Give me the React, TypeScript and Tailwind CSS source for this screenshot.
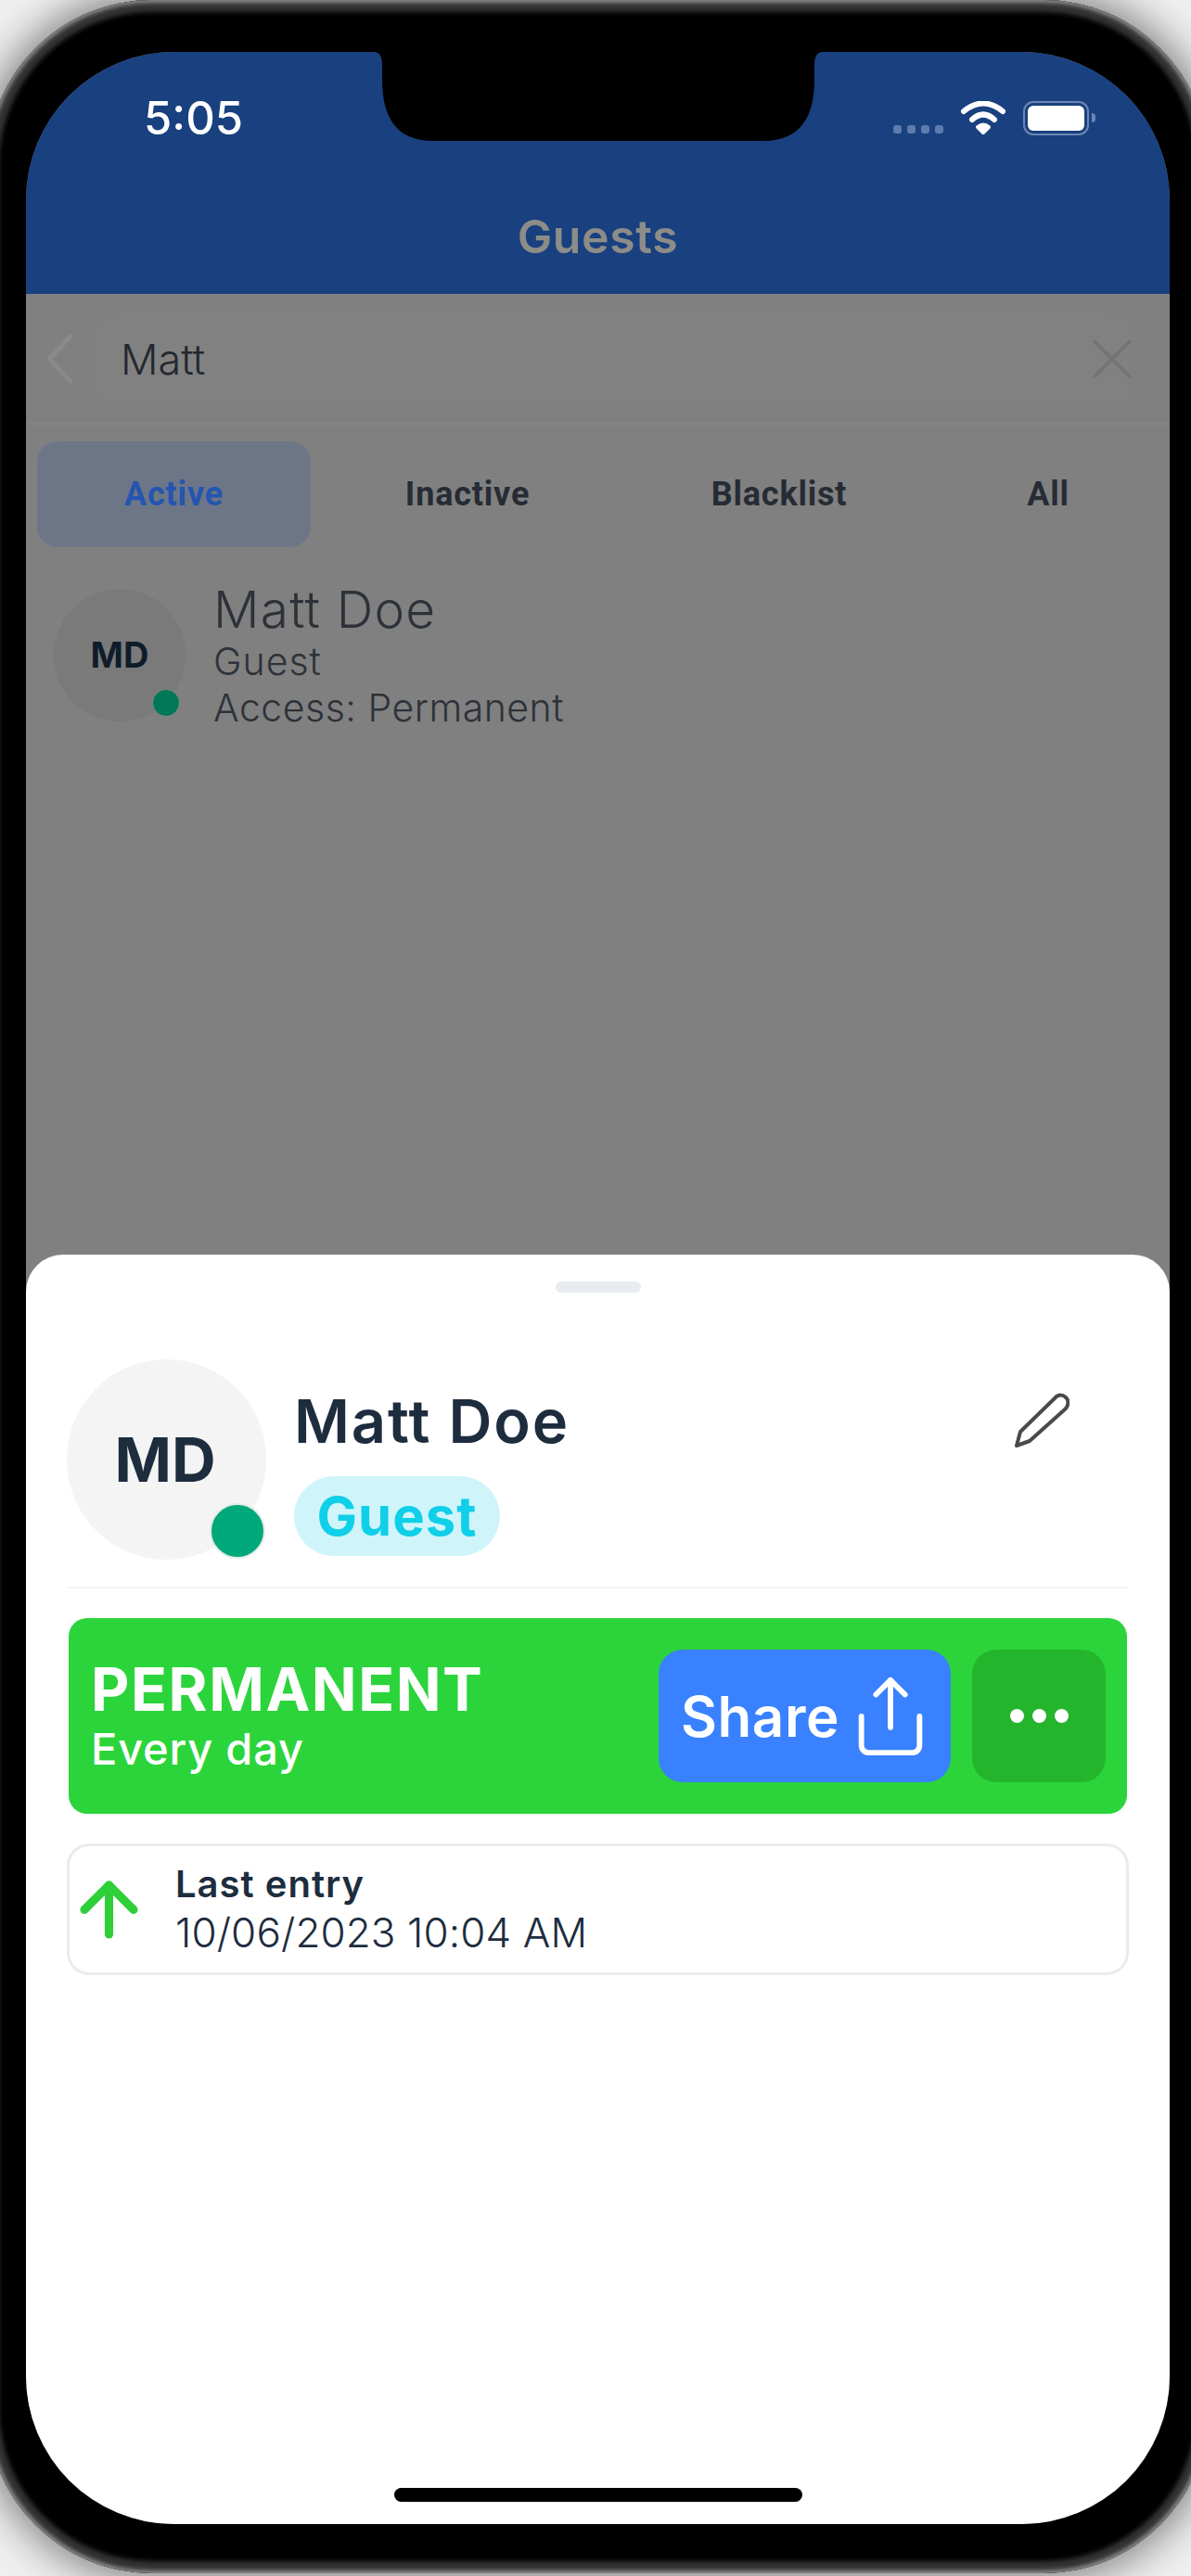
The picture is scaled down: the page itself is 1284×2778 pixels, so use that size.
import { ArrowUp, Share } from "lucide-react";

const mont = "font-['Inter','Liberation_Sans',sans-serif]";
const rob = "font-['Roboto','Liberation_Sans',sans-serif]";

function Notch() {
  return (
    <svg className="absolute left-[375px] top-0" width="484" height="96" viewBox="0 0 484 96">
      <path d="M0 0Q9 0 9 14V30C9 70 24 96 64 96H420C460 96 475 70 475 30V14Q475 0 484 0Z" fill="#000" />
    </svg>
  );
}

function Wifi() {
  return (
    <svg width="50" height="37" viewBox="0 0 50 37" fill="none" stroke="#fff" strokeLinecap="round">
      <path d="M4 11Q25 -6 46 11" strokeWidth="6" />
      <path d="M13 20Q25 9 37 20" strokeWidth="6" />
      <path d="M25 34L19 28Q25 23 31 28Z" fill="#fff" strokeWidth="4" strokeLinejoin="round" />
    </svg>
  );
}

function PencilIcon() {
  return (
    <svg width="60" height="60" viewBox="0 0 60 60" fill="none" stroke="#4a4a4a" strokeWidth="4" strokeLinejoin="round">
      <path d="M3 58L7 43L44 7C48 2 54 3 57 7C59 10 59 14 56 18L17 53Z" />
    </svg>
  );
}

function Battery() {
  return (
    <div className="flex items-center">
      <div className="flex h-[37px] w-[71px] rounded-[11px] border-2 border-[#6c86b0] p-[3px]">
        <div className="h-full w-full rounded-[6px] bg-white" />
      </div>
      <div className="ml-[3px] h-[10px] w-[4px] rounded-r-full bg-[#6c86b0]" />
    </div>
  );
}

function Tab({ label, w, active }: { label: string; w: string; active?: boolean }) {
  return (
    <div
      className={`flex h-[114px] items-center justify-center rounded-[22px] text-[36px] font-bold tracking-[0.8px] ${rob} ${w} ${
        active ? "bg-[#6c7687] text-[#2455b0]" : "text-[#262c35]"
      }`}
    >
      {label}
    </div>
  );
}

export default function App() {
  return (
    <div className="h-[2778px] w-[1284px] overflow-hidden bg-[#f0f0f0]">
      <div className="ml-[-14px] h-[2775px] w-[1317px] rounded-[178px] bg-black px-[42px] pt-[56px] shadow-[inset_0_0_4px_3px_#8a8a8a,inset_0_0_5px_13px_#333333,0_0_45px_6px_rgba(0,0,0,0.5)]">
        <div className="relative flex h-[2666px] w-[1233px] flex-col overflow-hidden rounded-[160px] bg-[#808080]">
          <Notch />
          <header className="flex h-[261px] shrink-0 flex-col bg-[#19407f]">
            <div className="mt-[49px] flex h-[44px] items-center justify-between pl-[127px] pr-[80px]">
              <span className={`text-[49px] font-medium leading-none text-white ${mont}`}>5:05</span>
              <div className="flex items-center">
                <div className="mr-[18px] mt-[24px] flex gap-[6px]">
                  <i className="h-[9px] w-[9px] rounded-[3px] bg-[#5c7cad]" />
                  <i className="h-[9px] w-[9px] rounded-[3px] bg-[#5c7cad]" />
                  <i className="h-[9px] w-[9px] rounded-[3px] bg-[#5c7cad]" />
                  <i className="h-[9px] w-[9px] rounded-[3px] bg-[#5c7cad]" />
                </div>
                <Wifi />
                <div className="ml-[18px]"><Battery /></div>
              </div>
            </div>
            <div className={`mt-[78px] text-center text-[50px] font-semibold leading-[56px] tracking-[0.6px] text-[#8c8c88] ${mont}`}>Guests</div>
          </header>

          <section className="h-[1037px] shrink-0 border-t border-[#858585]">
            <div className="flex h-[140px] items-center border-b-2 border-[#858585] pl-[20px] pr-[40px]">
              <svg width="34" height="56" viewBox="0 0 34 56" fill="none" stroke="#8a8a8a" strokeWidth="5" strokeLinecap="round" strokeLinejoin="round">
                <path d="M28 4L5 28L28 52" />
              </svg>
              <div className={`ml-[21px] mt-[2px] flex h-[100px] flex-1 items-center rounded-[24px] bg-[#818181] pl-[27px] text-[45px] font-light text-[#23282f] ${mont}`}>Matt</div>
              <svg className="-ml-[44px]" width="44" height="44" viewBox="0 0 44 44" fill="none" stroke="#747474" strokeWidth="4" strokeLinecap="round">
                <path d="M3 3L41 41M41 3L3 41" />
              </svg>
            </div>
            <div className="mt-[18px] flex pl-[12px]">
              <Tab label="Active" w="w-[295px]" active />
              <Tab label="Inactive" w="w-[338px]" />
              <Tab label="Blacklist" w="w-[334px]" />
              <Tab label="All" w="w-[246px]" />
            </div>
            <div className="mt-[45px] flex pl-[30px]">
              <div className="relative flex h-[143px] w-[142px] items-center justify-center rounded-full bg-[#7a7a7a]">
                <span className={`text-[38px] font-bold text-[#0f1c2b] ${mont}`}>MD</span>
                <span className="absolute left-[106px] top-[108px] h-[30px] w-[30px] rounded-full border border-[#858585] bg-[#007857]" />
              </div>
              <div className={`ml-[30px] -mt-[7px] ${mont}`}>
                <div className="text-[55px] font-light leading-[58px] tracking-[1.2px] text-[#2d3239]">Matt Doe</div>
                <div className="mt-[3px] text-[41px] font-light leading-[48px] tracking-[1px] text-[#2d3239]">Guest</div>
                <div className="mt-[2px] text-[41px] font-light leading-[48px] tracking-[0.5px] text-[#2d3239]">Access: Permanent</div>
              </div>
            </div>
          </section>

          <section className="relative -mt-[1px] flex flex-1 flex-col rounded-t-[40px] bg-white">
            <div className="mx-auto mt-[29px] h-[12px] w-[92px] rounded-full bg-[#e8ebef]" />
            <div className="mt-[72px] flex px-[44px]">
              <div className="relative flex h-[216px] w-[215px] shrink-0 items-center justify-center rounded-full bg-[#f4f4f4]">
                <span className={`mr-[3px] text-[66px] font-bold text-[#1d2d3e] ${mont}`}>MD</span>
                <span className="absolute left-[154px] top-[155px] h-[60px] w-[60px] rounded-full border-2 border-[#e3ebe8] bg-[#00a87a]" />
              </div>
              <div className="ml-[30px] flex-1">
                <div className={`mt-[32px] text-[65px] font-semibold leading-[70px] tracking-[1.8px] text-[#1d2d3e] ${mont}`}>Matt Doe</div>
                <div className={`mt-[24px] flex h-[86px] w-[222px] items-center justify-center rounded-full bg-[#cff5fa] text-[58px] font-bold tracking-[1px] text-[#10cfe8] ${mont}`}>Guest</div>
              </div>
              <div className="mr-[64px] mt-[35px]"><PencilIcon /></div>
            </div>
            <div className="mx-[44px] mt-[29px] h-[2px] bg-[#f3f4f6]" />
            <div className="mx-[46px] mt-[32px] flex h-[211px] items-center rounded-[20px] bg-[#2bd43a] pl-[24px] pr-[23px] text-white">
              <div className={`flex-1 ${mont}`}>
                <div className="text-[64px] font-bold leading-[68px] tracking-[1.6px]">PERMANENT</div>
                <div className="mt-[3px] text-[47px] font-medium leading-[54px] tracking-[0.8px]">Every day</div>
              </div>
              <div className="flex h-[143px] w-[315px] items-center justify-center gap-[20px] rounded-[26px] bg-[#3981ff] pr-[6px]">
                <span className={`text-[60px] font-semibold tracking-[0.6px] ${mont}`}>Share</span>
                <Share size={94} strokeWidth={1.5} className="-mx-[12px]" />
              </div>
              <div className="ml-[23px] flex h-[143px] w-[144px] items-center justify-center gap-[9px] rounded-[26px] bg-[#25b52c]">
                <i className="h-[15px] w-[15px] rounded-full bg-white" />
                <i className="h-[15px] w-[15px] rounded-full bg-white" />
                <i className="h-[15px] w-[15px] rounded-full bg-white" />
              </div>
            </div>
            <div className="mx-[44px] mt-[32px] flex h-[142px] items-center rounded-[24px] border-[3px] border-[#e9ebee]">
              <ArrowUp size={91} strokeWidth={2.4} color="#2fcf3a" className="-ml-[3px]" />
              <div className={`ml-[26px] ${mont}`}>
                <div className="text-[40px] font-semibold leading-[50px] tracking-[1px] text-[#1d2d3e]">Last entry</div>
                <div className="text-[44px] font-light leading-[54px] tracking-[0.1px] text-[#1d2d3e]">10/06/2023 10:04 AM</div>
              </div>
            </div>
            <div className="mx-auto mb-[24px] mt-auto h-[15px] w-[440px] rounded-full bg-black" />
          </section>
        </div>
      </div>
    </div>
  );
}
